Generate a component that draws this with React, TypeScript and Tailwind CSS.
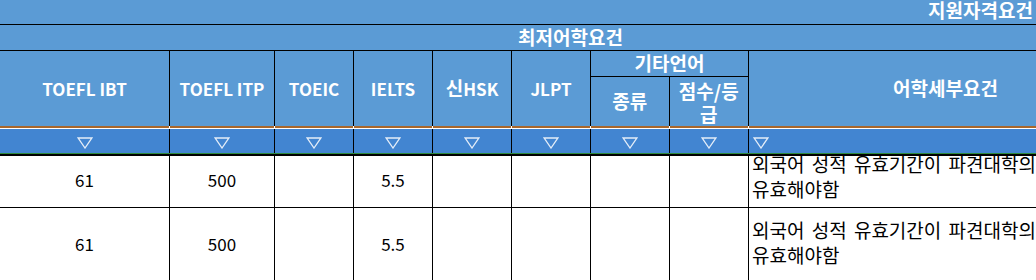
const cols = [
  { key: "ibt", w: "w-[170px]", label: <>TOEFL IBT</> },
  { key: "itp", w: "w-[105px]", label: <>TOEFL ITP</> },
  { key: "toeic", w: "w-[79px]", label: <>TOEIC</> },
  { key: "ielts", w: "w-[79px]", label: <>IELTS</> },
  {
    key: "hsk",
    w: "w-[79px]",
    label: (
      <>
        <span className="text-[19px]">신</span>HSK
      </>
    ),
  },
  { key: "jlpt", w: "w-[79px]", label: <>JLPT</> },
];

const rows = [
  { id: 1, ibt: "61", itp: "500", toeic: "", ielts: "5.5", h: "h-[52px]", pb: "pb-[12px]" },
  { id: 2, ibt: "61", itp: "500", toeic: "", ielts: "5.5", h: "h-[76px]", pb: "pb-[8px]" },
];

const widths = [
  "w-[170px]",
  "w-[105px]",
  "w-[79px]",
  "w-[79px]",
  "w-[79px]",
  "w-[79px]",
  "w-[79px]",
  "w-[79px]",
];

function Tri() {
  return (
    <svg width="16" height="12" viewBox="0 0 16 12">
      <polygon
        points="1.2,1 14.8,1 8,11"
        fill="none"
        stroke="#e4edf8"
        strokeWidth="1.3"
      />
    </svg>
  );
}

export default function App() {
  return (
    <div className="w-[1036px] h-[280px] overflow-hidden bg-white font-['Noto_Sans_CJK_KR',sans-serif] text-[17px]">
      {/* 상단 제목 */}
      <div className="flex h-[25px] items-start justify-end border-b border-black bg-[#5b9bd5] pr-[3px] text-[19px] font-bold leading-[20px] text-white">
        지원자격요건
      </div>
      <div className="flex h-[26px] items-center border-b border-black bg-[#5b9bd5] pl-[518px] text-[19px] font-bold text-white">
        최저어학요건
      </div>

      {/* 헤더 */}
      <div className="flex h-[75px] bg-[#5b9bd5] font-bold text-white">
        {cols.map((c) => (
          <div
            key={c.key}
            className={`${c.w} flex flex-none items-center justify-center border-r border-black`}
          >
            {c.label}
          </div>
        ))}
        <div className="flex w-[158px] flex-none flex-col border-r border-black text-[19px]">
          <div className="flex h-[26px] items-center justify-center border-b border-black">
            기타언어
          </div>
          <div className="flex flex-1">
            <div className="flex w-[79px] items-center justify-center border-r border-black">
              종류
            </div>
            <div className="flex w-[79px] items-center justify-center text-center leading-[23px]">
              점수/등
              <br />급
            </div>
          </div>
        </div>
        <div className="flex flex-1 items-center pl-[144px] text-[19px]">어학세부요건</div>
      </div>

      {/* 구분선 */}
      <div className="flex h-[2px] bg-[#a8672d]">
        {widths.map((w, i) => (
          <div key={i} className={`${w} flex-none border-r border-white`} />
        ))}
      </div>
      <div className="h-px bg-white" />

      {/* 필터 */}
      <div className="flex h-[24px] bg-[#4285d1]">
        {widths.map((w, i) => (
          <div
            key={i}
            className={`${w} flex flex-none items-center justify-center border-r border-black pt-[3px]`}
          >
            <Tri />
          </div>
        ))}
        <div className="flex flex-1 items-center pl-[4px] pt-[3px]">
          <Tri />
        </div>
      </div>
      <div className="h-px bg-[#2f8a3c]" />
      <div className="h-[2px] bg-black" />

      {/* 데이터 */}
      {rows.map((r) => (
        <div key={r.id} className={`flex ${r.h} border-b border-black text-black`}>
          <div className="flex w-[170px] flex-none items-center justify-center border-r border-black pb-[3px]">
            {r.ibt}
          </div>
          <div className="flex w-[105px] flex-none items-center justify-center border-r border-black pb-[3px]">
            {r.itp}
          </div>
          <div className="flex w-[79px] flex-none items-center justify-center border-r border-black pb-[3px]">
            {r.toeic}
          </div>
          <div className="flex w-[79px] flex-none items-center justify-center border-r border-black pb-[3px]">
            {r.ielts}
          </div>
          <div className="w-[79px] flex-none border-r border-black" />
          <div className="w-[79px] flex-none border-r border-black" />
          <div className="w-[79px] flex-none border-r border-black" />
          <div className="w-[79px] flex-none border-r border-black" />
          <div
            className={`flex flex-1 flex-col justify-center overflow-hidden whitespace-nowrap pl-[3px] text-[19px] leading-[25px] [word-spacing:3px] ${r.pb}`}
          >
            <p>외국어 성적 유효기간이 파견대학의 지원마감일까지</p>
            <p>유효해야함</p>
          </div>
        </div>
      ))}
    </div>
  );
}
